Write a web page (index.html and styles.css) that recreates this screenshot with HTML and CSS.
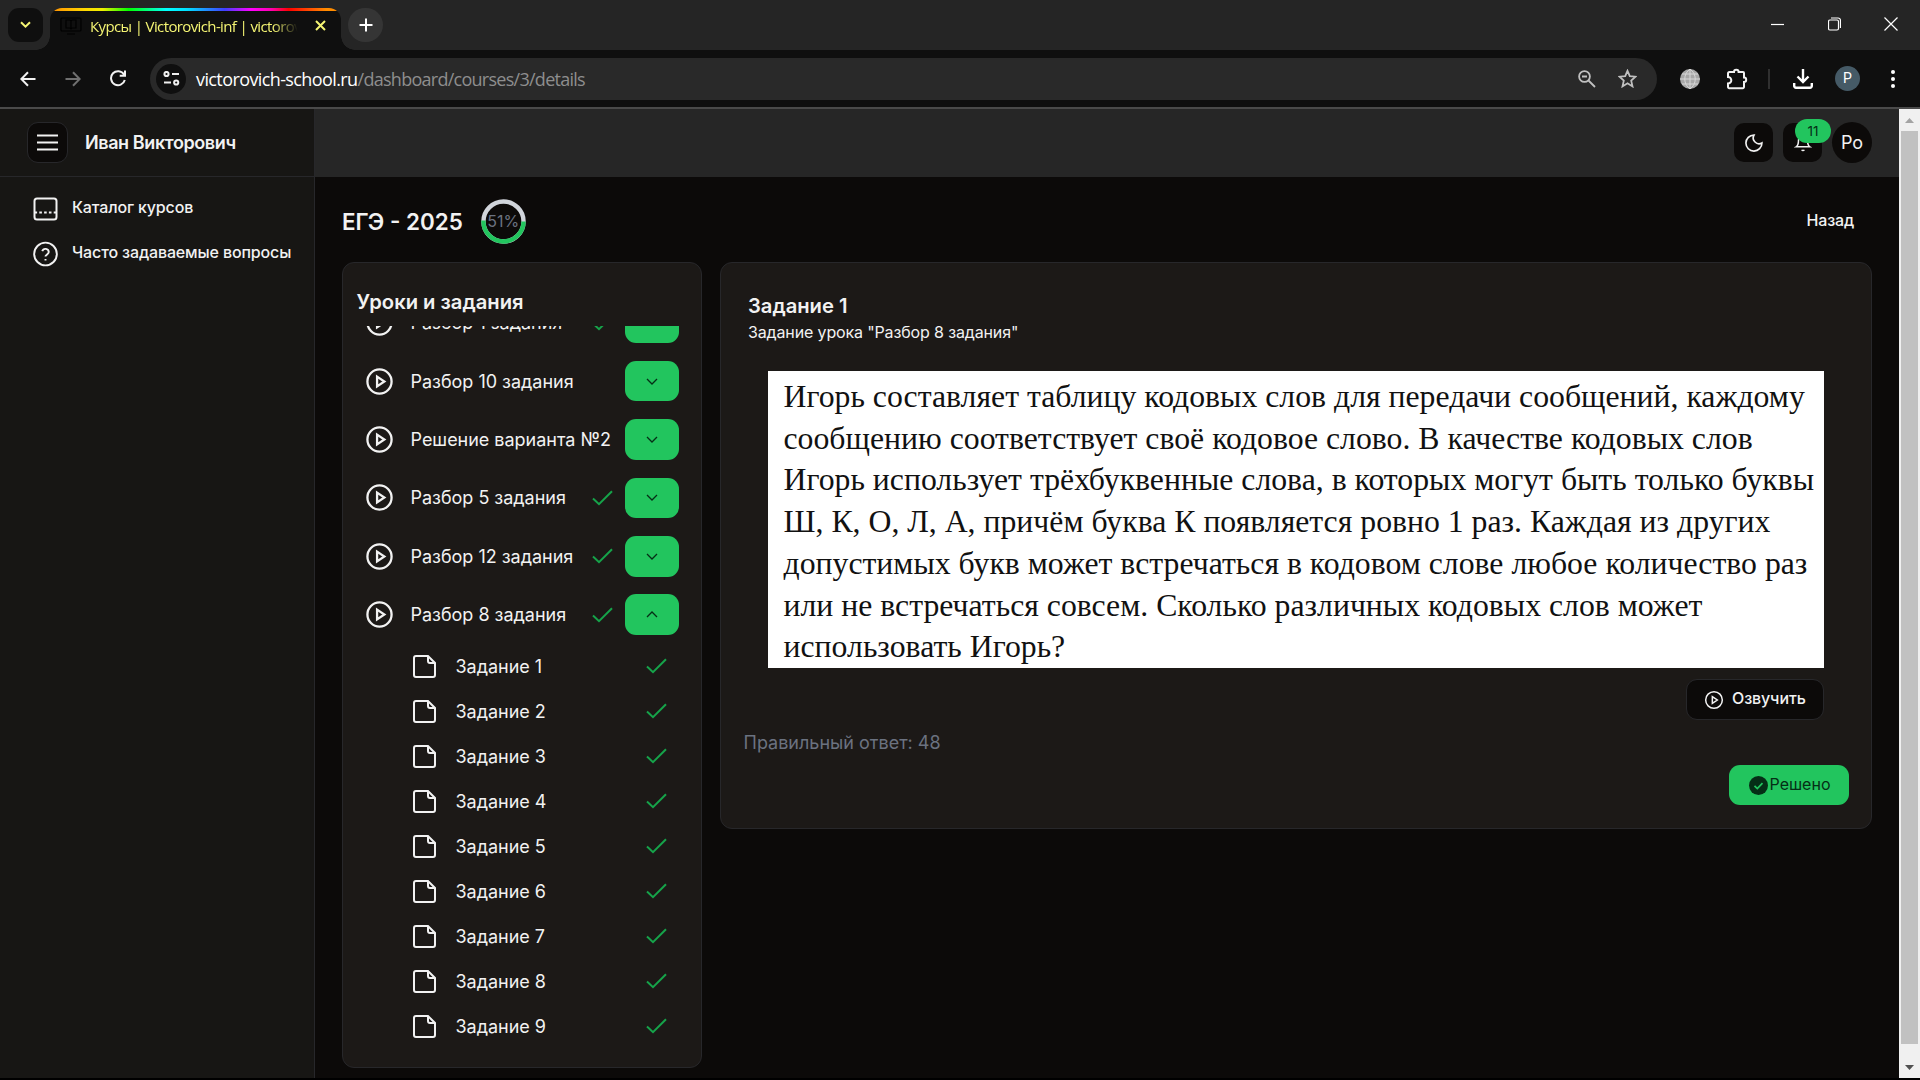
FILE: index.html
```html
<!DOCTYPE html>
<html lang="ru">
<head>
<meta charset="utf-8">
<title>Курсы | Victorovich-inf</title>
<link rel="stylesheet" href="styles.css">
</head>
<body>
<svg class="defs" width="0" height="0">
  <symbol id="play" viewBox="0 0 24 24"><circle cx="12" cy="12" r="10"/><path d="M10 8l6 4-6 4z"/></symbol>
  <symbol id="tick" viewBox="0 0 21 16"><path d="M1 8.5 7 14.2 20 1.2"/></symbol>
  <symbol id="file" viewBox="0 0 23 23"><path d="M3 1h12l7 7v12a2 2 0 0 1-2 2H3a2 2 0 0 1-2-2V3a2 2 0 0 1 2-2z"/><path d="M15 1v5a2 2 0 0 0 2 2h5"/></symbol>
  <symbol id="down" viewBox="0 0 12 7"><path d="M1 1l5 5 5-5"/></symbol>
  <symbol id="up" viewBox="0 0 12 7"><path d="M1 6l5-5 5 5"/></symbol>
</svg>
<div class="browser">
  <div class="tabstrip">
    <div class="tab-search"><svg width="11" height="8" viewBox="0 0 11 8"><path d="M1 1.2l4.5 4.5L10 1.2"/></svg></div>
    <div class="tab">
      <svg class="favicon" width="22" height="18" viewBox="0 0 22 18"><rect x="1" y="1" width="20" height="13" rx="1"/><path d="M11 4v8M6 3h4l1 1 1-1h4v8h-4l-1 1-1-1H6zM7 17h8"/></svg>
      <span class="tab-title">Курсы | Victorovich-inf | victorov</span>
      <svg class="tab-close" width="11" height="11" viewBox="0 0 11 11"><path d="M1 1l9 9M10 1l-9 9"/></svg>
    </div>
    <div class="newtab"><svg width="14" height="14" viewBox="0 0 14 14"><path d="M7 .5v13M.5 7h13"/></svg></div>
    <div class="winctl">
      <svg width="13" height="14" viewBox="0 0 13 14"><path d="M0 7.500h13"/></svg>
      <svg width="13" height="14" viewBox="0 0 13 14"><rect x=".5" y="3" width="10" height="10" rx="1.500"/><path d="M3 1h7a2.500 2.500 0 0 1 2.500 2.500V11"/></svg>
      <svg width="14" height="14" viewBox="0 0 14 14"><path d="M.5.5l13 13M13.500.5l-13 13"/></svg>
    </div>
  </div>
  <div class="toolbar">
    <svg class="nav" width="16" height="16" viewBox="0 0 16 16"><path d="M15.500 8H1.500M8 1.200 1.300 8 8 14.800"/></svg>
    <svg class="nav dim" width="16" height="16" viewBox="0 0 16 16"><path d="M.5 8h14M8 1.200 14.700 8 8 14.800"/></svg>
    <svg class="nav" width="16" height="17" viewBox="0 0 16 17"><path d="M14 4.500A7 7 0 1 0 14.800 10M15 .5v5.300H9.700"/></svg>
    <div class="omnibox">
      <div class="site"><svg width="17" height="15" viewBox="0 0 17 15"><circle cx="3.500" cy="3" r="2.100"/><path d="M9 3h7M1 11.500h7"/><circle cx="13.200" cy="11.500" r="2.100"/></svg></div>
      <span class="url"><b>victorovich-school.ru</b>/dashboard/courses/3/details</span>
      <svg class="zoom" width="18" height="18" viewBox="0 0 18 18"><circle cx="6.500" cy="6.500" r="5.400"/><path d="M4 6.500h5M10.500 10.500l6.500 6.500"/></svg>
      <svg class="star" width="19" height="19" viewBox="0 0 19 19"><path d="M9.500 1.800l2.300 5.400 5.700.5-4.300 3.900 1.300 5.800-5-3.100-5 3.100 1.300-5.800L1.500 7.700l5.700-.5z"/></svg>
    </div>
    <svg class="globe" width="20" height="20" viewBox="0 0 20 20"><circle cx="10" cy="10" r="10" fill="#a8a8a8" stroke="none"/><path d="M0 10h20M10 0v20M2 5h16M2 15h16M10 0C3 5 3 15 10 20M10 0c7 5 7 15 0 20" fill="none" stroke="#d8d8d8"/></svg>
    <svg class="ext" width="22" height="22" viewBox="0 0 22 22"><path d="M3.500 4H8a2.300 2.300 0 0 1 4.600 0H17a1 1 0 0 1 1 1v4.500a2.200 2.200 0 0 1 0 4.400V19a1.200 1.200 0 0 1-1.200 1.200H3.200A1.200 1.200 0 0 1 2 19v-3.500a3.300 3.300 0 0 0 0-6.600V5.500A1.500 1.500 0 0 1 3.500 4z"/></svg>
    <i class="sep"></i>
    <svg class="dl" width="20" height="20" viewBox="0 0 20 20"><path d="M10 0v12M4.500 7.500 10 13l5.500-5.500M1.200 14v3a1.700 1.700 0 0 0 1.700 1.700h14.200a1.700 1.700 0 0 0 1.700-1.700v-3"/></svg>
    <div class="profile">P</div>
    <svg class="dots" width="4" height="18" viewBox="0 0 4 18"><circle cx="2" cy="2" r="2"/><circle cx="2" cy="9" r="2"/><circle cx="2" cy="16" r="2"/></svg>
  </div>
</div>
<div class="page">
  <aside class="sidebar">
    <div class="brand">
      <div class="menu"><svg width="21" height="17" viewBox="0 0 21 17"><path d="M0 1.500h21M0 8.500h21M0 15.500h21"/></svg></div>
      <span class="brand-name">Иван Викторович</span>
    </div>
    <div class="side-item"><svg width="24" height="24" viewBox="0 0 24 24"><rect x="1" y="1.500" width="22" height="21" rx="2.500"/><path d="M1 15.500h22" stroke-dasharray="2.600 2.200"/></svg><span>Каталог курсов</span></div>
    <div class="side-item"><svg width="26" height="26" viewBox="0 0 26 26"><circle cx="13" cy="13" r="11.800"/><path d="M9.600 10a3.500 3.500 0 0 1 6.800 1c0 2.200-3.400 2.700-3.400 4.700M13 18.200v1.600"/></svg><span>Часто задаваемые вопросы</span></div>
  </aside>
  <div class="main">
    <header class="header">
      <div class="hbtn"><svg width="20" height="20" viewBox="0 0 24 24"><path d="M12 2.500a7 7 0 0 0 9.500 9.500A9.600 9.600 0 1 1 12 2.500z"/></svg></div>
      <div class="hbtn bell"><svg width="18" height="18" viewBox="0 0 24 24"><path d="M6 8a6 6 0 0 1 12 0c0 7 3 9 3 9H3s3-2 3-9M10.300 21a1.900 1.900 0 0 0 3.400 0"/></svg><span class="badge">11</span></div>
      <div class="avatar">Po</div>
    </header>
    <div class="topline">
      <h1>ЕГЭ - 2025</h1>
      <div class="ring"><svg width="45" height="45" viewBox="0 0 46 46"><circle cx="23" cy="23" r="20.500" stroke="#d1d5db"/><path d="M2.520 22A20.500 20.500 0 1 0 43.500 23" stroke="#22c55e"/></svg><span>51%</span></div>
      <span class="back">Назад</span>
    </div>
    <div class="columns">
      <section class="card lessons">
        <h2>Уроки и задания</h2>
        <div class="scroll">
          <div class="row"><svg class="play"><use href="#play"/></svg><span>Разбор 1 задания</span><svg class="tick"><use href="#tick"/></svg><div class="toggle"><svg class="chev"><use href="#down"/></svg></div></div>
          <div class="row"><svg class="play"><use href="#play"/></svg><span>Разбор 10 задания</span><div class="toggle"><svg class="chev"><use href="#down"/></svg></div></div>
          <div class="row"><svg class="play"><use href="#play"/></svg><span>Решение варианта №2</span><div class="toggle"><svg class="chev"><use href="#down"/></svg></div></div>
          <div class="row"><svg class="play"><use href="#play"/></svg><span>Разбор 5 задания</span><svg class="tick"><use href="#tick"/></svg><div class="toggle"><svg class="chev"><use href="#down"/></svg></div></div>
          <div class="row"><svg class="play"><use href="#play"/></svg><span>Разбор 12 задания</span><svg class="tick"><use href="#tick"/></svg><div class="toggle"><svg class="chev"><use href="#down"/></svg></div></div>
          <div class="row"><svg class="play"><use href="#play"/></svg><span>Разбор 8 задания</span><svg class="tick"><use href="#tick"/></svg><div class="toggle"><svg class="chev"><use href="#up"/></svg></div></div>
          <div class="sub"><svg class="file"><use href="#file"/></svg><span>Задание 1</span><svg class="tick"><use href="#tick"/></svg></div>
          <div class="sub"><svg class="file"><use href="#file"/></svg><span>Задание 2</span><svg class="tick"><use href="#tick"/></svg></div>
          <div class="sub"><svg class="file"><use href="#file"/></svg><span>Задание 3</span><svg class="tick"><use href="#tick"/></svg></div>
          <div class="sub"><svg class="file"><use href="#file"/></svg><span>Задание 4</span><svg class="tick"><use href="#tick"/></svg></div>
          <div class="sub"><svg class="file"><use href="#file"/></svg><span>Задание 5</span><svg class="tick"><use href="#tick"/></svg></div>
          <div class="sub"><svg class="file"><use href="#file"/></svg><span>Задание 6</span><svg class="tick"><use href="#tick"/></svg></div>
          <div class="sub"><svg class="file"><use href="#file"/></svg><span>Задание 7</span><svg class="tick"><use href="#tick"/></svg></div>
          <div class="sub"><svg class="file"><use href="#file"/></svg><span>Задание 8</span><svg class="tick"><use href="#tick"/></svg></div>
          <div class="sub"><svg class="file"><use href="#file"/></svg><span>Задание 9</span><svg class="tick"><use href="#tick"/></svg></div>
        </div>
      </section>
      <section class="card task">
        <h2>Задание 1</h2>
        <p class="subtitle">Задание урока "Разбор 8 задания"</p>
        <div class="statement">
          <p>Игорь составляет таблицу кодовых слов для передачи сообщений, каждому</p>
          <p>сообщению соответствует своё кодовое слово. В качестве кодовых слов</p>
          <p>Игорь использует трёхбуквенные слова, в которых могут быть только буквы</p>
          <p>Ш, К, О, Л, А, причём буква К появляется ровно 1 раз. Каждая из других</p>
          <p>допустимых букв может встречаться в кодовом слове любое количество раз</p>
          <p>или не встречаться совсем. Сколько различных кодовых слов может</p>
          <p>использовать Игорь?</p>
        </div>
        <div class="speak"><svg width="20" height="20"><use href="#play"/></svg><span>Озвучить</span></div>
        <p class="answer">Правильный ответ: 48</p>
        <div class="solved"><svg width="19" height="19" viewBox="0 0 19 19"><circle cx="9.500" cy="9.500" r="9.500" fill="#052e16" stroke="none"/><path d="M5.500 9.800l2.800 2.700 5.200-5.400" fill="none" stroke="#22c55e" stroke-width="1.700"/></svg><span>Решено</span></div>
      </section>
    </div>
  </div>
  <div class="scrollbar">
    <svg class="arrow" width="9" height="5" viewBox="0 0 9 5"><path d="M0 5 4.500 0 9 5z" fill="#a3a3a3"/></svg>
    <div class="thumb"></div>
    <svg class="arrow" width="9" height="5" viewBox="0 0 9 5"><path d="M0 0h9L4.500 5z" fill="#505050"/></svg>
  </div>
</div>
</body>
</html>
```
FILE: styles.css
```css
* { box-sizing: border-box; }
body { margin: 0; width: 1920px; height: 1080px; overflow: hidden; background: #000; color: #f2f2f2; font-family: Inter, sans-serif; display: flex; flex-direction: column; }
svg { display: block; flex: none; fill: none; stroke: currentColor; stroke-width: 2; }
.defs { position: absolute; }
h1, h2, p { margin: 0; }
span { white-space: nowrap; }

/* Browser chrome */
.browser { height: 109px; flex: none; border-bottom: 2px solid #4a4a4a; background: #0f0f0f; }
.tabstrip { height: 50px; background: #252525; display: flex; align-items: flex-start; padding: 8px 0 0 8px; }
.tab-search { width: 35px; height: 34px; border-radius: 11px; background: #0f0f0f; color: #f5f573; display: flex; align-items: center; justify-content: center; }
.tab { position: relative; width: 291px; height: 42px; margin-left: 7px; border-radius: 12px 12px 0 0; background: linear-gradient(90deg, #ff8c00 0%, #ffd800 12%, #f0f000 18%, #00ff00 27%, #00ffff 40%, #00e0ff 47%, #4040ff 60%, #f0f 69%, #ff00b0 76%, #f00 82%, #ff8c00 95%) top / 100% 3px no-repeat, #0f0f0f; display: flex; align-items: center; padding: 0 12px 7px 10px; color: #f5f573; }
.tab::before, .tab::after { content: ""; position: absolute; bottom: 0; width: 14px; height: 14px; }
.tab::before { left: -14px; background: radial-gradient(circle at 0 0, transparent 13.500px, #0f0f0f 14px); }
.tab::after { right: -14px; background: radial-gradient(circle at 100% 0, transparent 13.500px, #0f0f0f 14px); }
.favicon { stroke: #000; stroke-width: 1.2; }
.tab-title { font: 15px "Open Sans", sans-serif; letter-spacing: -.62px; width: 212px; margin-left: 8px; overflow: hidden; mask-image: linear-gradient(90deg, #000 86%, transparent 98%); }
.tab-close { margin-left: 13px; }
.newtab { width: 35px; height: 34px; border-radius: 17px; margin-left: 7px; background: #353535; color: #fff; display: flex; align-items: center; justify-content: center; }
.winctl { margin: 9px 22px 0 auto; display: flex; gap: 43.500px; color: #fff; }
.winctl svg { stroke-width: 1.2; }
.toolbar { height: 57px; display: flex; align-items: center; padding: 0 25px 0 20px; color: #f2f2f2; }
.nav { margin-right: 29px; }
.toolbar .nav:nth-child(3) { margin-right: 24px; }
.nav.dim { color: #707070; }
.omnibox { width: 1507px; height: 42px; border-radius: 21px; background: #292929; display: flex; align-items: center; padding: 0 20px 0 6px; color: #c0c0c0; }
.site { width: 30px; height: 30px; border-radius: 50%; background: #0f0f0f; color: #eee; display: flex; align-items: center; justify-content: center; }
.url { font: 18px "Open Sans", sans-serif; color: #8e8e8e; margin: 0 auto 0 10px; letter-spacing: -.73px; }
.url b { font-weight: 400; color: #fff; letter-spacing: -.6px; }
.star { margin-left: 22px; }
.zoom, .star { stroke-width: 1.8; }
.globe { margin-left: 23px; stroke-width: 1; }
.ext { margin-left: 26px; }
.sep { width: 2px; height: 20px; background: #303030; margin: 0 23px 0 20px; }
.dl { stroke-width: 2.4; color: #fff; }
.profile { width: 25px; height: 25px; border-radius: 50%; background: #455a66; color: #fff; font: 14px Roboto, sans-serif; text-align: center; line-height: 25px; margin-left: 22px; }
.dots { fill: #fff; stroke: none; margin-left: auto; }

/* Application */
.page { height: 969px; display: flex; background: #0c0a09; }
.sidebar { width: 315px; border-right: 1px solid #27272a; background: #171614; }
.brand { height: 68px; border-bottom: 1px solid #27272a; display: flex; align-items: center; padding-left: 27px; margin-bottom: 9px; }
.menu { width: 41px; height: 41px; border: 1px solid #27272a; border-radius: 11px; background: #0c0a09; display: flex; align-items: center; justify-content: center; }
.brand-name { font-size: 18px; font-weight: 600; margin-left: 17px; letter-spacing: -.4px; }
.side-item { height: 45px; display: flex; align-items: center; padding-left: 33px; font-size: 16px; font-weight: 500; letter-spacing: -.14px; }
.side-item svg { width: 25px; }
.side-item span { margin-left: 14px; padding-bottom: 3px; }
.main { width: 1584px; }
.header { height: 68px; background: #262626; display: flex; align-items: center; justify-content: flex-end; padding: 0 27px 1px 0; }
.hbtn { width: 39px; height: 39px; border-radius: 10px; background: #0c0a09; display: flex; align-items: center; justify-content: center; margin-right: 10px; position: relative; }
.badge { position: absolute; left: 12px; top: -4px; width: 36px; height: 24px; border-radius: 12px; background: #22c55e; color: #052e16; font-size: 13.500px; line-height: 24px; text-align: center; }
.avatar { width: 40px; height: 41px; border-radius: 50%; background: #0c0a09; font-size: 18px; display: flex; align-items: center; justify-content: center; }
.topline { height: 85px; display: flex; align-items: center; padding: 4px 45px 0 27px; }
h1 { font-size: 22.400px; font-weight: 600; white-space: nowrap; }
.ring { margin-left: 18px; display: grid; place-items: center; }
.ring > * { grid-area: 1 / 1; }
.ring svg { stroke-width: 4.500; }
.ring span { font-size: 16px; color: #6b7280; padding-bottom: 2px; }
.back { margin-left: auto; font-size: 16px; font-weight: 500; letter-spacing: -.2px; padding-bottom: 4px; }
.columns { display: flex; align-items: flex-start; gap: 18px; padding-left: 27px; }
.card { background: #1c1917; border: 1px solid #27272a; border-radius: 12px; }
.lessons { width: 360px; height: 806px; padding: 27px 0 0 13.500px; }
h2 { font-size: 20.200px; font-weight: 600; line-height: 24px; }
.scroll { height: 720px; margin-top: 12px; overflow: hidden; display: flex; flex-direction: column; font-size: 18px; }
.row { flex: none; height: 58.400px; display: flex; align-items: center; padding: 0 22px 0 8.500px; }
.row:first-child { margin-top: -32.500px; }
.play { width: 29px; height: 29px; margin-right: 16.500px; stroke-width: 1.900; }
.row span, .sub span { letter-spacing: -.02px; }
.tick { width: 21px; height: 16px; color: #16a34a; margin-left: auto; }
.toggle { width: 54px; height: 40.500px; border-radius: 11px; background: #22c55e; margin-left: auto; color: #052e16; display: flex; align-items: center; justify-content: center; }
.tick + .toggle { margin-left: 12px; }
.chev { width: 12px; height: 7px; stroke-width: 1.300; }
.sub { flex: none; height: 45px; display: flex; align-items: center; padding: 0 34px 0 56.500px; }
.file { width: 23px; height: 23px; margin-right: 19.500px; }
.task { width: 1152px; height: 567px; padding: 31px 22px 0 27px; display: flex; flex-direction: column; }
.subtitle { font-size: 16px; line-height: 22px; margin-top: 3px; letter-spacing: -.14px; }
.statement { width: 1056px; height: 297px; flex: none; margin: 28px 0 0 20px; padding: 5px 0 0 15.500px; background: #fff; color: #111; font: 31.750px/41.700px "Liberation Serif", serif; white-space: nowrap; }
.speak { width: 138px; height: 41px; margin: 11px 25px 0 auto; border: 1px solid #27272a; border-radius: 11px; background: #0c0a09; display: flex; align-items: center; padding-left: 17px; gap: 8px; font-size: 16px; font-weight: 500; letter-spacing: -.1px; }
.speak svg { stroke-width: 1.8; }
.speak span { padding-bottom: 4px; }
.answer { margin: 11px 0 0 -4.500px; font-size: 18px; line-height: 24px; color: #6b7280; }
.solved { width: 120px; height: 40px; margin: 10px 0 0 auto; border-radius: 11px; background: #22c55e; color: #052e16; display: flex; align-items: center; padding-left: 19.500px; gap: 2px; font-size: 16px; }
.solved span { padding-bottom: 2px; }
.scrollbar { width: 21px; background: #f0f0f0; display: flex; flex-direction: column; align-items: center; justify-content: space-between; padding: 9px 0 8px; }
.arrow { stroke: none; }
.thumb { width: 17px; height: 913px; margin-bottom: 14px; background: #c1c1c1; }
```
